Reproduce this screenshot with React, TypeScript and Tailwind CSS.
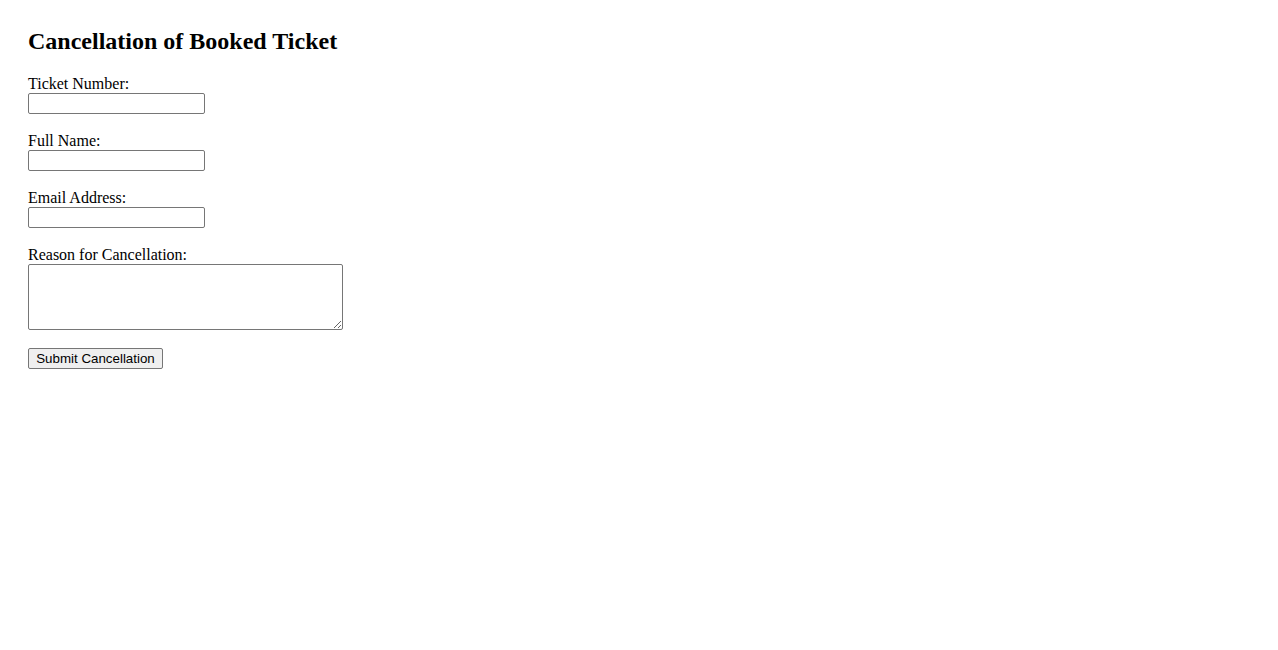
import React from "react";

function Field({ label, area }: { label: string; area?: boolean }) {
  return (
    <div className="flex flex-col items-start mb-[18px]">
      <label className="block h-[18px] leading-[18px] text-[16px] text-black">{label}</label>
      {area ? (
        <textarea className="block w-[315px] h-[66px] border border-[#767676] rounded-[2px] bg-white resize-y outline-none" />
      ) : (
        <input
          type="text"
          className="block w-[177px] h-[21px] border border-[#767676] rounded-[2px] bg-white px-[2px] outline-none text-[13.33px]"
        />
      )}
    </div>
  );
}

export default function App() {
  return (
    <div className="min-h-[650px] bg-white pl-[28px] pt-[28px] text-black" style={{ fontFamily: '"Liberation Serif", "Times New Roman", serif' }}>
      <h2 className="text-[24px] font-bold leading-[26px] h-[26px] mb-[21px]">Cancellation of Booked Ticket</h2>
      <form onSubmit={(e) => e.preventDefault()}>
        <Field label="Ticket Number:" />
        <Field label="Full Name:" />
        <Field label="Email Address:" />
        <Field label="Reason for Cancellation:" area />
        <button
          type="submit"
          className="block w-[135px] h-[21px] border border-[#767676] rounded-[2px] bg-[#efefef] text-[13.33px] leading-[19px] text-black"
          style={{ fontFamily: '"Liberation Sans", Arial, sans-serif' }}
        >
          Submit Cancellation
        </button>
      </form>
    </div>
  );
}
